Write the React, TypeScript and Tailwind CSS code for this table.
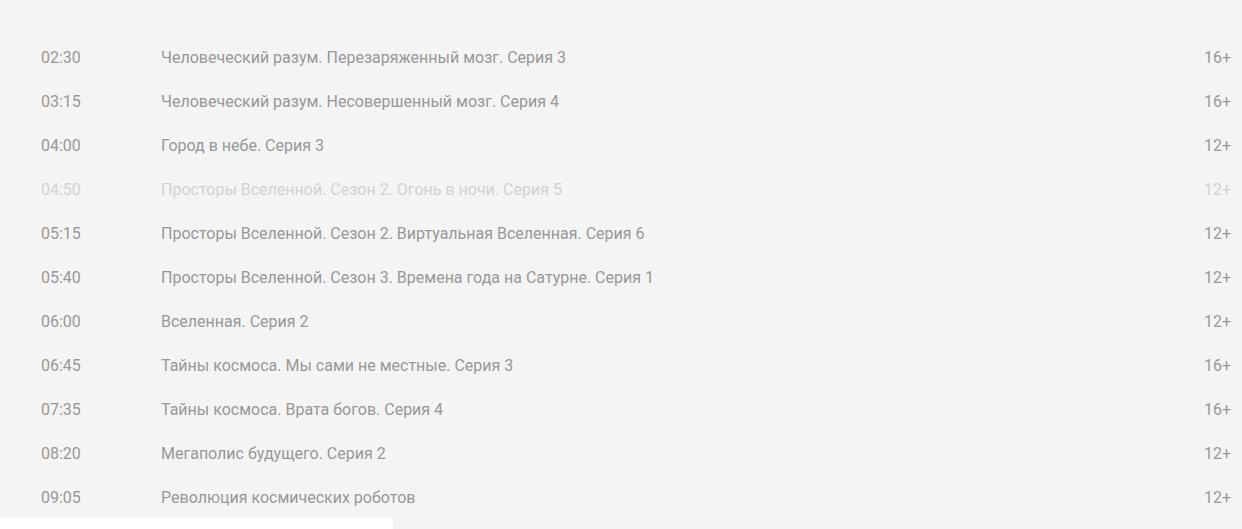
const rows = [
  { time: "02:30", title: "Человеческий разум. Перезаряженный мозг. Серия 3", age: "16+" },
  { time: "03:15", title: "Человеческий разум. Несовершенный мозг. Серия 4", age: "16+" },
  { time: "04:00", title: "Город в небе. Серия 3", age: "12+" },
  { time: "04:50", title: "Просторы Вселенной. Сезон 2. Огонь в ночи. Серия 5", age: "12+", past: true },
  { time: "05:15", title: "Просторы Вселенной. Сезон 2. Виртуальная Вселенная. Серия 6", age: "12+" },
  { time: "05:40", title: "Просторы Вселенной. Сезон 3. Времена года на Сатурне. Серия 1", age: "12+" },
  { time: "06:00", title: "Вселенная. Серия 2", age: "12+" },
  { time: "06:45", title: "Тайны космоса. Мы сами не местные. Серия 3", age: "16+" },
  { time: "07:35", title: "Тайны космоса. Врата богов. Серия 4", age: "16+" },
  { time: "08:20", title: "Мегаполис будущего. Серия 2", age: "12+" },
  { time: "09:05", title: "Революция космических роботов", age: "12+" },
];

export default function App() {
  return (
    <div className="w-[1242px] h-[529px] bg-[#f4f4f4] overflow-hidden font-['Roboto',sans-serif] text-[16px]">
      <div className="pt-[36px]">
        {rows.map((r) => (
          <div
            key={r.time}
            className={`flex items-center h-[44px] pl-[41px] pr-[11px] ${r.past ? "text-[#d2d2d2]" : "text-[#989898]"}`}
          >
            <div className="w-[120px]">{r.time}</div>
            <div className="flex-1">{r.title}</div>
            <div>{r.age}</div>
          </div>
        ))}
      </div>
      <div className="w-[393px] h-[20px] bg-white rounded-tr-[3px] mt-[-2px]" />
    </div>
  );
}
